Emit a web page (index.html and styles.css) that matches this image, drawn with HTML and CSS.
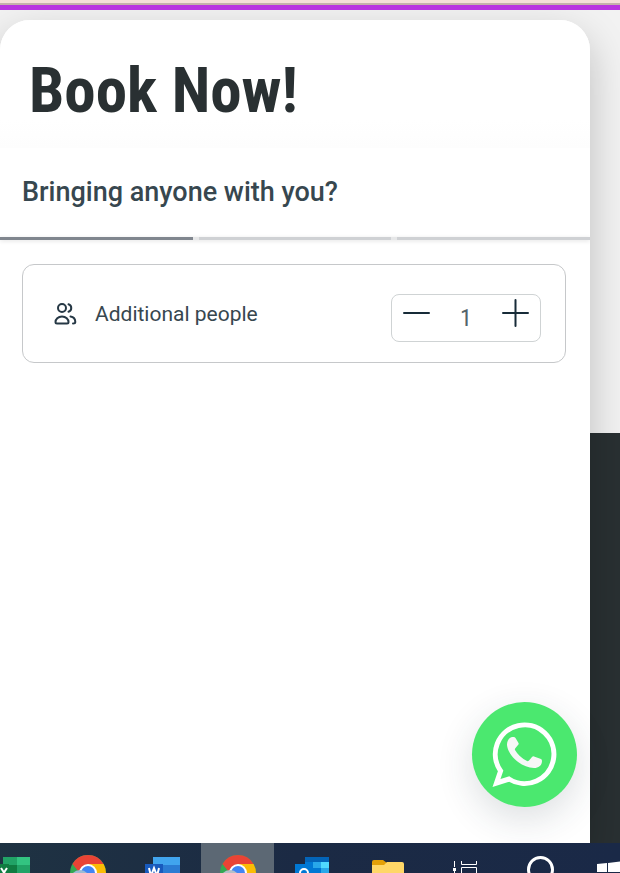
FILE: index.html
```
<!DOCTYPE html>
<html lang="en">
    <head>
        <meta charset="utf-8">
        <meta name="viewport" content="width=device-width, initial-scale=1">
        <title>Book Now!</title>
        <link rel="stylesheet" href="styles.css">
    </head>
    <body>
        <div class="topbar"></div>
        <main class="page">
            <section class="panel">
                <header class="panel-header">
                    <h1>Book Now!</h1>
                </header>
                <form class="booking">
                    <h2>Bringing anyone with you?</h2>
                    <div class="steps">
                        <span class="step active"></span>
                        <span class="step"></span>
                        <span class="step"></span>
                    </div>
                    <div class="card">
                        <svg class="people" viewBox="0 0 24 24" aria-hidden="true">
                            <circle cx="9" cy="6" r="4"/>
                            <path d="M15.500 2.200a4 4 0 0 1 0 7.600"/>
                            <path d="M9 14.500c-4 0-6.500 3-6.500 5.500 0 1 .5 1.500 1.500 1.500h10c1 0 1.500-.5 1.500-1.500 0-2.500-2.500-5.500-6.500-5.500z"/>
                            <path d="M17.500 14.500c3 .5 4.800 3 4.800 5.500 0 1-.5 1.500-2.300 1.500"/>
                        </svg>
                        <label for="people">Additional people</label>
                        <div class="stepper">
                            <button type="button" id="minus" aria-label="Remove person">
                                <svg viewBox="0 0 28 28"><path d="M1 14h25"/></svg>
                            </button>
                            <input id="people" type="text" inputmode="numeric" value="1">
                            <button type="button" id="plus" aria-label="Add person">
                                <svg viewBox="0 0 28 28"><path d="M2 14h25M14.500 1v26"/></svg>
                            </button>
                        </div>
                    </div>
                </form>
            </section>
            <a class="whatsapp" href="#" aria-label="WhatsApp">
                <svg viewBox="0 0 105 105">
                    <path class="bubble" d="M37 77A29.300 29.300 0 1 0 28.600 69L24.500 81z"/>
                    <path class="phone" d="M40 35C36.500 36 35 39 35 43C36 54 50 66 62 66C67 66 70 63 70 59Q70 57.500 69 57L62 54.500Q61 54 60 55L57 58.500Q56 59.500 55 59Q47 55 43 48Q42.500 47 43.500 46L46 43Q47 42 46.500 41L43.500 36Q43 34.500 40 35z"/>
                </svg>
            </a>
        </main>
        <nav class="taskbar">
            <button type="button" aria-label="Excel">
                <svg viewBox="0 0 75 30">
                    <path fill="#21a366" d="M28 14h14v8H28z"/>
                    <path fill="#33c481" d="M42 14h13v8H42z"/>
                    <path fill="#107c41" d="M28 22h14v8H28z"/>
                    <path fill="#21a366" d="M42 22h13v8H42z"/>
                    <path fill="#107c41" d="M20 21h14v9H20z"/>
                    <path stroke="#fff" stroke-width="2" fill="none" d="M26 25l6 9M32 25l-6 9"/>
                </svg>
            </button>
            <button type="button" aria-label="Chrome">
                <svg viewBox="0 0 75 30">
                    <circle cx="38" cy="30" r="18" fill="#34a853"/>
                    <path fill="#fbbc05" d="M38 21h15.600A18 18 0 0 1 56 30H38z"/>
                    <path fill="#ea4335" d="M22.400 21A18 18 0 0 1 53.600 21H38L29 29z"/>
                    <circle cx="38" cy="30" r="9" fill="#fff"/>
                    <circle cx="38" cy="30" r="7" fill="#4285f4"/>
                    <circle cx="30" cy="37" r="10" fill="#9cbcd4"/>
                </svg>
            </button>
            <button type="button" aria-label="Word">
                <svg viewBox="0 0 75 30">
                    <path fill="#41a5ee" d="M28 14h27v8H28z"/>
                    <path fill="#2b7cd3" d="M28 22h27v8H28z"/>
                    <path fill="#185abd" d="M20 21h18v9H20z"/>
                    <path stroke="#fff" stroke-width="2" fill="none" d="M24 25l2 8 3-8 3 8 2-8"/>
                </svg>
            </button>
            <button type="button" class="current" aria-label="Chrome, active">
                <svg viewBox="0 0 75 30">
                    <circle cx="38" cy="30" r="18" fill="#34a853"/>
                    <path fill="#fbbc05" d="M38 21h15.600A18 18 0 0 1 56 30H38z"/>
                    <path fill="#ea4335" d="M22.400 21A18 18 0 0 1 53.600 21H38L29 29z"/>
                    <circle cx="38" cy="30" r="9" fill="#fff"/>
                    <circle cx="38" cy="30" r="7" fill="#4285f4"/>
                    <circle cx="30" cy="37" r="10" fill="#b4c0c8"/>
                </svg>
            </button>
            <button type="button" aria-label="Outlook">
                <svg viewBox="0 0 75 30">
                    <path fill="#0364b8" d="M30 14h24v5H30z"/>
                    <path fill="#0078d4" d="M30 19h8v11h-8z"/>
                    <path fill="#28a8ea" d="M38 19h8v6h-8z"/>
                    <path fill="#50d9ff" d="M46 19h8v6h-8z"/>
                    <path fill="#0078d4" d="M38 25h8v5h-8z"/>
                    <path fill="#28a8ea" d="M46 25h8v5h-8z"/>
                    <path fill="#0078d4" d="M20 21h18v9H20z"/>
                    <circle cx="29" cy="30" r="4" fill="none" stroke="#fff" stroke-width="2"/>
                </svg>
            </button>
            <button type="button" aria-label="File Explorer">
                <svg viewBox="0 0 75 30">
                    <path fill="#e3a008" d="M22 19q0-2 2-2h9l4 3v4H22z"/>
                    <path fill="#ffd767" d="M22 22h12l3-3h15q2 0 2 2v9H22z"/>
                </svg>
            </button>
            <button type="button" aria-label="Task view">
                <svg viewBox="0 0 75 30">
                    <path stroke="#fff" fill="none" d="M29.500 18v6M29.500 28v2M36.500 18v3.500h15V18M36.500 30v-5.500h15V30"/>
                    <path fill="#fff" d="M28 25h3v3h-3z"/>
                </svg>
            </button>
            <button type="button" aria-label="Search">
                <svg viewBox="0 0 75 30"><circle cx="40.500" cy="26.500" r="12" fill="none" stroke="#fff" stroke-width="3"/></svg>
            </button>
            <button type="button" aria-label="Start">
                <svg viewBox="0 0 75 30"><path fill="#fff" d="M22 21l10-1v9H22zM33 20l16-2v11H33z"/></svg>
            </button>
        </nav>
        <script>
            function $(id){return document.getElementById(id)};
            function change(by){
                let count = (parseInt($("people").value) || 0) + by;
                $("people").value = Math.max(0, count);
            }
            $("minus").onclick = ()=>change(-1);
            $("plus").onclick = ()=>change(1);
        </script>
    </body>
</html>
```
FILE: styles.css
```
*{
    box-sizing: border-box;
}
body{
    margin: 0;
    height: 100vh;
    display: flex;
    flex-direction: column;
    overflow: hidden;
    font-family: Roboto, sans-serif;
    color: #37474f;
}
h1, h2{
    margin: 0;
}
button{
    border: none;
    padding: 0;
    background: none;
}
svg{
    display: block;
}

.topbar{
    height: 10px;
    border-top: 3px solid #f5dfd8;
    border-bottom: 5px solid #b934e0;
    background-color: #c5b0aa;
}
.page{
    position: relative;
    flex: 1;
    min-height: 0;
    display: flex;
    padding: 10px 30px 0 0;
    overflow: hidden;
    background: linear-gradient(#f2f2f2 423px, #293032 423px);
}
.panel{
    flex: 1;
    overflow: hidden;
    background-color: white;
    border-radius: 30px 30px 0 0;
    box-shadow: 0 16px 40px rgba(0, 0, 0, 0.22);
}
.panel-header{
    padding: 33px 29px 19px;
    background: linear-gradient(white 100px, #fdfdfd);
}
.panel-header h1{
    font-family: "Roboto Condensed", Roboto, sans-serif;
    font-size: 63px;
    line-height: 76px;
    font-weight: 700;
    color: #293032;
}
.booking h2{
    padding: 28px 22px 29px;
    font-size: 27px;
    line-height: 32px;
    font-weight: 500;
}
.steps{
    display: grid;
    grid-template-columns: repeat(3, 1fr);
    gap: 6px;
    background-color: #e6e7e8;
    box-shadow: 0 1px 4px rgba(0, 0, 0, 0.12);
}
.step{
    height: 3px;
    background-color: #cfd1d4;
}
.step.active{
    background-color: #80868e;
}
.card{
    display: flex;
    align-items: center;
    min-height: 99px;
    margin: 24px 24px 0 22px;
    padding: 0 24px 0 30px;
    border: 1px solid #c6c8ca;
    border-radius: 12px;
}
.people{
    width: 24px;
    height: 24px;
    fill: none;
    stroke: #263845;
    stroke-width: 2;
    stroke-linecap: round;
    stroke-linejoin: round;
}
.card label{
    flex: 1;
    margin-left: 18px;
    font-size: 21px;
    line-height: 28px;
    color: #37474f;
}
.stepper{
    display: flex;
    width: 150px;
    height: 48px;
    margin-top: 9px;
    border: 1px solid #cfd3d4;
    border-radius: 8px;
}
.stepper button{
    width: 50px;
    padding: 0 11px 10px;
}
.stepper svg{
    width: 28px;
    height: 28px;
    stroke: #172b38;
    stroke-width: 2;
    stroke-linecap: round;
}
.stepper input{
    flex: 1;
    min-width: 0;
    padding: 0;
    border: none;
    outline: none;
    background: none;
    text-align: center;
    font: 400 24px "Roboto Condensed", Roboto, sans-serif;
    color: #54646b;
}

.whatsapp{
    position: absolute;
    right: 43px;
    bottom: 36px;
    width: 105px;
    height: 105px;
    border-radius: 50%;
    background-color: #4be86f;
    box-shadow: 0 12px 36px rgba(38, 56, 69, 0.16);
}
.bubble{
    fill: none;
    stroke: white;
    stroke-width: 5;
}
.phone{
    fill: #f7f7f7;
}

/* the bar starts halfway through its first icon */
.taskbar{
    display: flex;
    height: 30px;
    margin-left: -25px;
    background: linear-gradient(90deg, #1f3342, #1b2a44 50%, #1a2947);
}
.taskbar button{
    flex: none;
    width: 75px;
}
.taskbar svg{
    width: 75px;
    height: 30px;
}
.taskbar .current{
    width: 73px;
    margin: 0 1px;
    background-color: #5c6874;
}
.current svg{
    margin-left: -1px;
}
```
